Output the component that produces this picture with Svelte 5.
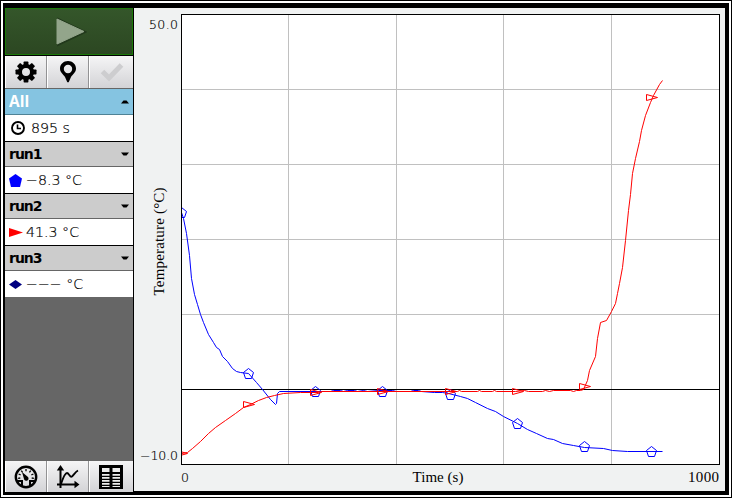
<script lang="ts">
  type Run = { name: string; value: string; shape: string; color: string };

  const runs: Run[] = [
    { name: 'run1', value: '−8.3 °C', shape: '6.5,0 13,4.5 11,13 2,13 0,4.5', color: '#0000ff' },
    { name: 'run2', value: '41.3 °C', shape: '0,2 14,6.5 0,11', color: '#ff0000' },
    { name: 'run3', value: '−−− °C', shape: '0,6.5 6.5,2 13,6.5 6.5,11', color: '#000080' },
  ];

  const gridX = [288, 396, 503, 611];
  const gridY = [89, 164, 239, 314];

  const cooling =
    '181,212 183,218 186,233 189,255 191,278 194,294 197,304 200,314 203,322 208,334 213,342 216,347 219,349 222,356 227,361 232,368 236,371 240,372 248,373 256,382 262,389 270,399 275,404 276,403 277,393 279,391 330,391 333,390 340,390 343,391 347,390 354,390 357,391 363,390 367,391 378,390 392,390 396,391 410,391 413,390 418,390 421,391 434,392 442,392 448,393 460,396 467,398 475,402 487,408 495,411 503,416 517,423 527,429 536,433 547,438 553,439 562,443 573,445 584,447 603,448 612,450 627,451 662,451';
  const warming =
    '181,453 187,452 192,448 200,441 208,433 215,427 225,420 235,413 243,407 250,404 258,400 266,397 274,395 283,393 300,392 318,392 321,391 457,391 459,390 461,391 477,391 479,390 481,391 492,391 494,390 496,391 515,391 524,390 528,391 542,391 545,390 549,391 553,390 570,390 573,391 576,390 580,390 583,389 587,380 589,370 595,356 597,338 600,322 606,320 611,311 615,303 617,293 619,283 622,267 625,240 628,210 630,194 632,173 635,158 639,141 641,130 645,115 650,102 653,95 659,84 662,80';

  const pentagons = [[181, 212], [248, 373], [315, 391], [382, 391], [450, 394], [517, 423], [584, 446], [651, 451]];
  const triangles = [[181, 453], [248, 404], [315, 392], [382, 391], [450, 391], [517, 391], [584, 386], [651, 97]];
  const ticks = [0, 45, 90, 135, 180, 225, 270, 315];
</script>

<div class="frame">
  <div class="screen">
    <aside>
      <button class="start" aria-label="Start">
        <svg width="32" height="30" viewBox="0 0 32 30">
          <path d="M3 2 30 15 3 28Z" fill="#22391c" stroke="#22391c" stroke-width="2" />
          <path d="M2 2 29 14.500 2 27Z" fill="#93a58b" stroke="#93a58b" stroke-linejoin="round" />
        </svg>
      </button>
      <div class="tools top">
        <button aria-label="Setup">
          <svg width="22" height="22" viewBox="-11 -11 22 22">
            {#each ticks as angle}
              <rect x="-2.4" y="-10.5" width="4.8" height="6" rx="0.7" transform="rotate({angle})" />
            {/each}
            <circle r="6" fill="none" stroke="#000" stroke-width="4" />
          </svg>
        </button>
        <button aria-label="Keep point">
          <svg width="16" height="22" viewBox="0 0 16 22">
            <path fill-rule="evenodd" d="M8 0C3.500 0 0 3.400 0 7.500 0 11.500 3.500 13.500 5 16L7.300 21.300H8.700L11 16C12.500 13.500 16 11.500 16 7.500 16 3.400 12.500 0 8 0ZM8 3.800A4.200 4.200 0 1 1 8 12.200 4.200 4.200 0 1 1 8 3.800Z" />
          </svg>
        </button>
        <button aria-label="Store" disabled>
          <svg width="24" height="20" viewBox="0 0 24 20">
            <path d="M2.500 9.500 9 16 21.500 3" fill="none" stroke="#cdcdcf" stroke-width="5" />
          </svg>
        </button>
      </div>

      <header class="all">
        <span>All</span>
        <svg width="8" height="4" viewBox="0 0 8 4"><path d="M0 3.500 2.500 .5H5.500L8 3.500Z" /></svg>
      </header>
      <div class="reading time">
        <svg width="14" height="14" viewBox="0 0 14 14" fill="none" stroke="#000">
          <circle cx="7" cy="7" r="6" stroke-width="1.900" />
          <path d="M6.500 3.500V7.500H10" stroke-width="1.600" />
        </svg>
        <span>895 s</span>
      </div>

      {#each runs as run (run.name)}
        <header class="run">
          <span>{run.name}</span>
          <svg width="8" height="4" viewBox="0 0 8 4"><path d="M0 .5H8L5.500 3.500H2.500Z" /></svg>
        </header>
        <div class="reading">
          <svg width="14" height="13" viewBox="0 0 14 13"><polygon points={run.shape} fill={run.color} /></svg>
          <span>{run.value}</span>
        </div>
      {/each}

      <div class="tools bottom">
        <button aria-label="Meter">
          <svg width="24" height="24" viewBox="-12 -12 24 24">
            <circle r="10.200" fill="none" stroke="#000" stroke-width="2.400" />
            {#each [-100, -68, -36, 0, 36, 68, 100] as angle}
              <path d="M0-8V-5.800" stroke="#000" stroke-width="1.300" transform="rotate({angle})" />
            {/each}
            <path d="M-4-5 2 0A2.300 2.300 0 1 1-2 2Z" />
            <path d="M-9 4H-4V10M9 4H4V10" fill="none" stroke="#000" stroke-width="2" />
          </svg>
        </button>
        <button aria-label="Graph">
          <svg width="24" height="24" viewBox="0 0 24 24">
            <path d="M4.500 3V23M1 19.500H20" fill="none" stroke="#000" stroke-width="2" />
            <path d="M.8 5.500 4.500 0 8.200 5.500ZM18.500 15.800 23.500 19.500 18.500 23.200Z" />
            <path d="M5 19C7 13 9 8 11 8S14 13 16 11.500 19 7 22 5.500" fill="none" stroke="#000" stroke-width="1.800" />
          </svg>
        </button>
        <button class="table" aria-label="Table">
          <svg width="24" height="24" viewBox="0 0 24 24">
            <path d="M0 0H24V24H0Z" />
            <path d="M3 3H10.500V7H3ZM13.500 3H21V7H13.500Z" fill="#ececec" />
            {#each [9, 12, 15, 18] as y}
              <path d="M3 {y}H10.500V{y + 1.7}H3ZM13.500 {y}H21V{y + 1.7}H13.500Z" fill="#ececec" />
            {/each}
            <path d="M3 21H10.500V22H3ZM13.500 21H21V22H13.500Z" fill="#ececec" />
          </svg>
        </button>
      </div>
    </aside>

    <!-- integer coordinates land on pixel centres -->
    <svg class="graph" width="591" height="483" viewBox="133.5 7.5 591 483">
      <defs>
        <clipPath id="plot"><rect x="181.500" y="14" width="538" height="451" /></clipPath>
      </defs>
      <rect x="181" y="14" width="538" height="450" fill="#fff" />
      {#each gridX as x}
        <path class="grid" d="M{x} 14V464" />
      {/each}
      {#each gridY as y}
        <path class="grid" d="M181 {y}H719" />
      {/each}
      <path class="axis" d="M181 389H719" />
      <g clip-path="url(#plot)">
        <g class="series cooling">
          <polyline points={cooling} />
          {#each pentagons as [x, y]}
            <polygon points="{x},{y - 5} {x + 5},{y - 1} {x + 3},{y + 5} {x - 3},{y + 5} {x - 5},{y - 1}" />
          {/each}
        </g>
        <g class="series warming">
          <polyline points={warming} />
          {#each triangles as [x, y]}
            <polygon points="{x - 5},{y - 3} {x + 6},{y} {x - 5},{y + 3}" />
          {/each}
        </g>
      </g>
      <rect class="axis" x="181" y="14" width="538" height="450" />

      <g class="numbers">
        <text x="148.500" y="28.500" textLength="29">50.0</text>
        <text x="139.500" y="459.500" textLength="38">−10.0</text>
        <text x="180.500" y="481.500">0</text>
      </g>
      <g class="titles">
        <text x="412" y="481.500" textLength="51">Time (s)</text>
        <text x="687.500" y="481.500" textLength="31">1000</text>
        <text transform="translate(163.500 295) rotate(-90)" textLength="108">Temperature (°C)</text>
      </g>
    </svg>
  </div>
</div>

<style>
  .frame {
    width: 732px;
    height: 498px;
    box-sizing: border-box;
    border: 1px solid #000;
    padding: 2px;
    background: #fff;
  }

  .screen {
    display: flex;
    height: 492px;
    box-sizing: border-box;
    padding: 5px 4px 3px 2px;
    background: #000;
  }

  aside {
    display: flex;
    flex-direction: column;
    width: 128px;
    height: 484px;
    margin-right: 1px;
    background: #666;
    font-family: 'DejaVu Sans', sans-serif;
  }

  button {
    border: 0;
    margin: 0;
    padding: 0;
    display: flex;
    align-items: center;
    justify-content: center;
  }

  .start {
    height: 47px;
    flex: none;
    padding-left: 3px;
    border: 1px solid #1a7a08;
    background: linear-gradient(#34562a, #2c4722);
  }

  .tools {
    display: grid;
    grid-template-columns: 42px 42px 44px;
    flex: none;
  }

  .tools button {
    background: linear-gradient(#f5f5f6, #d3d3d6);
    border-left: 1px solid #fff;
    border-right: 1px solid #929294;
  }

  .tools button:last-child {
    border-right: 0;
  }

  .tools .table {
    padding-right: 2px;
  }

  .top {
    height: 32px;
    border-top: 1px solid #000;
    border-bottom: 1px solid #666;
  }

  .bottom {
    height: 31px;
    margin-top: auto;
  }

  header {
    display: flex;
    align-items: center;
    justify-content: space-between;
    flex: none;
    height: 24px;
    padding: 0 4px;
    background: #ccc;
    border-bottom: 1px solid #666;
    font-family: 'DejaVu Sans', sans-serif;
    font-size: 14px;
    font-weight: bold;
    line-height: 24px;
  }

  header span {
    margin-top: -1px;
  }

  .all {
    height: 25px;
    background: #85c4e1;
    border-color: #4f8396;
    color: #fff;
  }

  .all span {
    font-family: 'Open Sans', sans-serif;
    font-size: 15.5px;
    margin-top: -2px;
  }

  .run {
    border-top: 1px solid #000;
  }

  .run span {
    letter-spacing: -1px;
  }

  .reading {
    display: flex;
    align-items: center;
    gap: 3px;
    flex: none;
    height: 26px;
    padding-left: 4px;
    background: #fff;
    font-family: 'DejaVu Sans Light', 'DejaVu Sans', sans-serif;
    font-weight: 200;
    font-size: 14.2px;
    -webkit-text-stroke: 0.2px #000;
    white-space: pre;
  }

  .reading span {
    margin-top: -1px;
  }

  .time {
    gap: 6px;
    padding-left: 6px;
  }

  .graph {
    display: block;
    flex: none;
    background: #f0f2f2;
  }

  .grid {
    stroke: #c0c0c0;
  }

  .axis {
    fill: none;
    stroke: #000;
  }

  .series {
    fill: none;
    stroke-width: 1;
  }

  .cooling {
    stroke: #0000ff;
  }

  .warming {
    stroke: #ff0000;
  }

  .numbers {
    font-family: 'DejaVu Sans Light', 'DejaVu Sans', sans-serif;
    font-weight: 200;
    font-size: 12.5px;
    stroke: #000;
    stroke-width: 0.2;
  }

  .titles {
    font-family: 'Liberation Serif', serif;
    font-size: 15px;
  }
</style>
